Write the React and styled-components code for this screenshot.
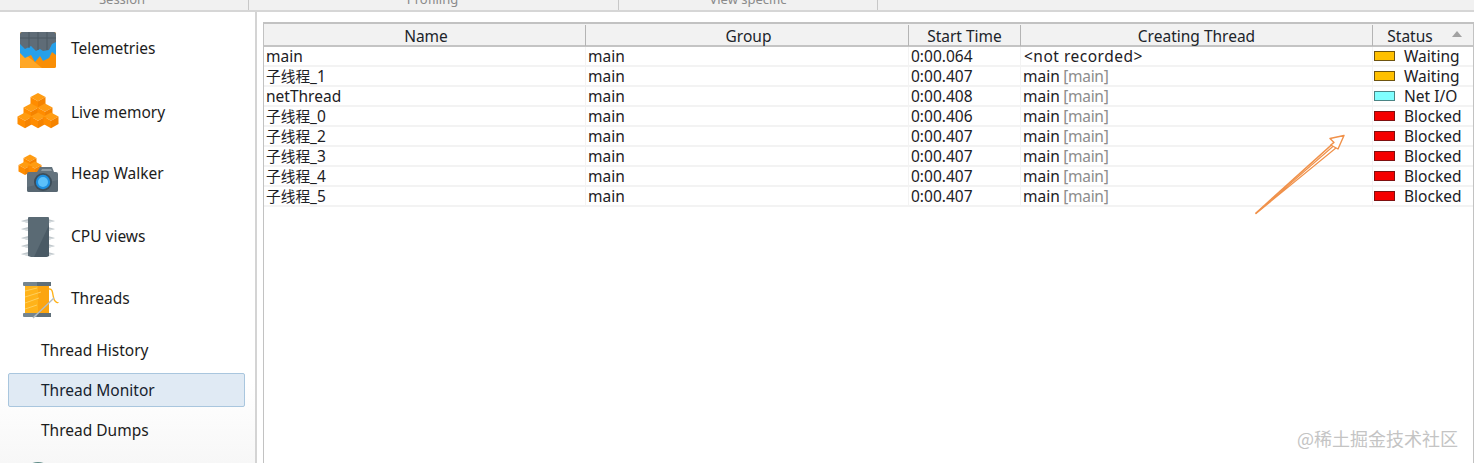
import React from "react";
import styled, { createGlobalStyle } from "styled-components";

const Global = createGlobalStyle`
  html, body { margin: 0; padding: 0; height: 463px; overflow: hidden; background: #fff; }
  body { font-family: "Noto Sans", "Noto Sans CJK SC", sans-serif; font-size: 15.5px; color: #1c1c1c; }
  * { box-sizing: border-box; }
`;
const Page = styled.div`position: relative; width: 1474px; height: 463px; display: flex; flex-direction: column; overflow: hidden;`;
const Toolbar = styled.div`height: 12px; flex: none; display: flex; background: #f1f1f1; border-bottom: 2px solid #d6d6d6; overflow: hidden;`;
const ToolGroup = styled.div`
  width: ${p => p.$w}px; flex: none; height: 10px; border-right: 1px solid #c8c8c8;
  display: flex; justify-content: center; padding-right: ${p => p.$pr || 0}px;
  span { font-size: 13px; line-height: 16px; margin-top: -9px; color: #8a8a8a; }
`;
const Body = styled.div`flex: 1; display: flex; min-height: 0;`;
const Sidebar = styled.nav`
  width: 257px; flex: none; border-right: 2px solid #d4d4d4; padding: 16px 8px 0 0; overflow: hidden;
  background: linear-gradient(180deg, #fff 0%, #fff 82%, #f7f7f7 100%);
`;
const NavItem = styled.div`height: 40px; margin-top: ${p => p.$gap}px; display: flex; align-items: center; padding-left: 16px;`;
const IconBox = styled.span`width: 44px; height: 40px; margin-right: 11px; flex: none; display: block; svg { display: block; overflow: visible; }`;
const SubItem = styled.div`
  height: 34px; margin: ${p => p.$gap}px 2px 0 8px; display: flex; align-items: center; padding: 0 0 1px 32px;
  border: 1px solid ${p => p.$active ? "#a9c6de" : "transparent"}; border-radius: 2px;
  background: ${p => p.$active ? "#e0eaf4" : "transparent"}; color: ${p => p.$active ? "#16222e" : "inherit"};
`;
const Content = styled.main`flex: 1; padding: 10px 0 0 6px; min-width: 0;`;
const Table = styled.div`width: 1211px; height: 460px; border: 2px solid #c2c2c2; border-bottom: 0; border-right-width: 1px; border-left-width: 1px;`;
const cols = "322px 323px 112px 352px 1fr";
const HeaderRow = styled.div`display: grid; grid-template-columns: ${cols}; height: 23px; background: #f2f2f2; border-bottom: 2px solid #c4c4c4;`;
const HeadCell = styled.div`
  display: flex; align-items: center; justify-content: center; position: relative; line-height: 19px; color: #20242a;
  padding: 2px ${p => p.$pr || 0}px 0 ${p => p.$pl || 0}px;
  border-right: ${p => p.$last ? "0" : "1px solid #b4b4b4"}; margin: 1px 0;
`;
const SortMark = styled.i`position: absolute; right: 11px; top: 6px; width: 0; height: 0; border-left: 5px solid transparent; border-right: 5px solid transparent; border-bottom: 6px solid #a2a2a2;`;
const Row = styled.div`display: grid; grid-template-columns: ${cols}; height: 20px; border-bottom: 2px solid #f3f3f3;`;
const Cell = styled.div`display: flex; align-items: center; padding: 0 0 3px 2px; line-height: 18px; white-space: pre; border-right: ${p => p.$last ? "0" : "1px solid #f3f3f3"}; height: 20px; color: #1c2024;`;
const Cjk = styled.span`font-size: 14.7px; font-family: "Noto Sans CJK SC", sans-serif;`;
const Muted = styled.span`color: #8c8c8c; margin-left: 3.5px; letter-spacing: -0.3px;`;
const NotRecorded = styled.span`letter-spacing: 0.5px; margin-left: 1px;`;
const Swatch = styled.i`width: 21px; height: 10px; flex: none; margin: 0 9px 0 -1px; background: ${p => p.$fill}; border: 1px solid ${p => p.$edge};`;
const Watermark = styled.div`position: absolute; right: 16px; bottom: 14px; font-size: 18px; line-height: 22px; color: #c4c4c4; font-family: "Noto Sans CJK SC", sans-serif; `;
const ArrowLayer = styled.svg`position: absolute; left: 1250px; top: 130px; pointer-events: none;`;

const Cube = ({ x, y, s = 7 }) => (
  <g>
    <path d={`M${x} ${y - s * .55}L${x + s} ${y}L${x} ${y + s * .55}L${x - s} ${y}Z`} fill="#ff9c12" />
    <path d={`M${x - s} ${y}L${x} ${y + s * .55}V${y + s * 1.55}L${x - s} ${y + s}Z`} fill="#ff8c00" />
    <path d={`M${x + s} ${y}L${x} ${y + s * .55}V${y + s * 1.55}L${x + s} ${y + s}Z`} fill="#f58300" />
  </g>
);
const TelemetryIcon = () => (
  <svg width="44" height="40" viewBox="0 0 44 40">
    <rect x="4" y="4" width="36" height="36" rx="2" fill="#ff9a0e" />
    <path d="M4 40V27L40 14V38a2 2 0 0 1-2 2Z" fill="#f98e05" />
    <path d="M4 22L26 40H6a2 2 0 0 1-2-2Z" fill="#ffa726" />
    <path d="M4 13H40V27L36 24L33 30L27 33L24 28L19 34L15 27L9 30L4 25Z" fill="#26a0ea" />
    <path d="M6 4H38a2 2 0 0 1 2 2V14L36 16L33 22L27 23L24 21L20 23L15 18L9 21L4 16V6a2 2 0 0 1 2-2Z" fill="#5f6c77" />
    <path d="M4 10H40M13 4V20M22 4V22M31 4V22" stroke="#4c5863" strokeWidth="1" fill="none" />
  </svg>
);
const MemoryIcon = () => (
  <svg width="44" height="40" viewBox="0 0 44 40">
    <Cube x={22} y={5} s={7.5} />
    <Cube x={15} y={15.5} s={7.5} />
    <Cube x={29} y={15.5} s={7.5} />
    <Cube x={9} y={24.5} s={7.5} />
    <Cube x={22} y={24.5} s={7.5} />
    <Cube x={35} y={24.5} s={7.5} />
  </svg>
);
const HeapIcon = () => (
  <svg width="44" height="40" viewBox="0 0 44 40">
    <Cube x={14} y={5} s={6.5} />
    <Cube x={9} y={12} s={6.5} />
    <Cube x={19} y={12} s={6.5} />
    <path d="M13 19H21L24 14H36L38 19H40a2 2 0 0 1 2 2V37a2 2 0 0 1-2 2H13a2 2 0 0 1-2-2V21a2 2 0 0 1 2-2Z" fill="#63727d" />
    <path d="M26 16H35L36 18H25Z" fill="#8f9ca5" />
    <path d="M11 34L42 27V37a2 2 0 0 1-2 2H13a2 2 0 0 1-2-2Z" fill="#586772" />
    <circle cx="27" cy="29" r="9" fill="#3d4d59" />
    <circle cx="27" cy="29" r="7.2" fill="#1e8fe0" />
    <circle cx="27" cy="29" r="5" fill="#5cc0fa" />
  </svg>
);
const CpuIcon = () => (
  <svg width="44" height="42" viewBox="0 0 44 42">
    <path d="M5 5L12 3V7ZM39 5L32 3V7ZM5 13L12 11V15ZM39 13L32 11V15ZM5 22L12 20V24ZM39 22L32 20V24ZM5 30L12 28V32ZM39 30L32 28V32ZM5 38L12 36V40ZM39 38L32 36V40Z" fill="#c0c8cc" />
    <path d="M5 5H39L32 7H12ZM5 13H39L32 15H12ZM5 22H39L32 24H12ZM5 30H39L32 32H12ZM5 38H39L32 40H12Z" fill="#d4dadd" />
    <path d="M13 1H32a1 1 0 0 1 1 1V40L30 41H15L12 40V2a1 1 0 0 1 1-1Z" fill="#5a6a74" />
    <path d="M33 9V40L30 41H18Z" fill="#4a5a65" />
  </svg>
);
const SpoolIcon = () => (
  <svg width="44" height="42" viewBox="0 0 44 42">
    <rect x="9" y="8" width="24" height="27" fill="#ffb31a" />
    <path d="M22 8H33V35H22Z" fill="#fca510" />
    <path d="M9 13L21 10M9 19L25 14M9 25L23 20M9 31L21 27" stroke="#ffcf5c" strokeWidth="1" />
    <rect x="7" y="4" width="28" height="4" rx="1" fill="#75858f" />
    <rect x="7" y="35" width="28" height="4" rx="1" fill="#75858f" />
    <path d="M21 4H35V8H21ZM21 35H35V39H21Z" fill="#5f6f79" />
    <path d="M33 11C38 10 36 20 39 23C41 25 42 25 42 24" stroke="#ffb31a" strokeWidth="1.4" fill="none" />
    <path d="M17 40L38 20" stroke="#b4bdc3" strokeWidth="1.4" />
  </svg>
);
const NextIcon = () => (
  <svg width="44" height="40" viewBox="0 0 44 40"><circle cx="22" cy="16" r="15" fill="#5d8a86" /></svg>
);

const rows = [
  [null, "main", "0:00.064", null, "w"],
  ["子线程", "_1", "0:00.407", 1, "w"],
  [null, "netThread", "0:00.408", 1, "n"],
  ["子线程", "_0", "0:00.406", 1, "b"],
  ["子线程", "_2", "0:00.407", 1, "b"],
  ["子线程", "_3", "0:00.407", 1, "b"],
  ["子线程", "_4", "0:00.407", 1, "b"],
  ["子线程", "_5", "0:00.407", 1, "b"],
];
const statuses = {
  w: { label: "Waiting", fill: "#ffc000", edge: "#6e5410" },
  n: { label: "Net I/O", fill: "#80ffff", edge: "#4b8585" },
  b: { label: "Blocked", fill: "#f40000", edge: "#7f1010" },
};

export default function App() {
  return (
    <Page>
      <Global />
      <Toolbar>
        <ToolGroup $w={249} $pr={4}><span>Session</span></ToolGroup>
        <ToolGroup $w={370} $pr={2}><span>Profiling</span></ToolGroup>
        <ToolGroup $w={259} ><span>View specific</span></ToolGroup>
      </Toolbar>
      <Body>
        <Sidebar>
          <NavItem $gap={0}><IconBox><TelemetryIcon /></IconBox><span>Telemetries</span></NavItem>
          <NavItem $gap={24}><IconBox><MemoryIcon /></IconBox><span>Live memory</span></NavItem>
          <NavItem $gap={21}><IconBox><HeapIcon /></IconBox><span>Heap Walker</span></NavItem>
          <NavItem $gap={23}><IconBox><CpuIcon /></IconBox><span>CPU views</span></NavItem>
          <NavItem $gap={22}><IconBox><SpoolIcon /></IconBox><span>Threads</span></NavItem>
          <SubItem $gap={15}>Thread History</SubItem>
          <SubItem $gap={6} $active>Thread Monitor</SubItem>
          <SubItem $gap={6}>Thread Dumps</SubItem>
          <NavItem $gap={14}><IconBox><NextIcon /></IconBox></NavItem>
        </Sidebar>
        <Content>
          <Table>
            <HeaderRow>
              <HeadCell $pl={3}>Name</HeadCell>
              <HeadCell $pl={3}>Group</HeadCell>
              <HeadCell>Start Time</HeadCell>
              <HeadCell>Creating Thread</HeadCell>
              <HeadCell $last $pr={26}>Status<SortMark /></HeadCell>
            </HeaderRow>
            {rows.map(([cjk, name, time, rec, st]) => (
              <Row key={name}>
                <Cell>{cjk && <Cjk>{cjk}</Cjk>}{name}</Cell>
                <Cell>main</Cell>
                <Cell>{time}</Cell>
                <Cell>{rec ? <>main<Muted>[main]</Muted></> : <NotRecorded>{"<not recorded>"}</NotRecorded>}</Cell>
                <Cell $last><Swatch $fill={statuses[st].fill} $edge={statuses[st].edge} />{statuses[st].label}</Cell>
              </Row>
            ))}
          </Table>
        </Content>
      </Body>
      <ArrowLayer width="100" height="90" viewBox="0 0 100 90">
        <path d="M5.5 83.5L88 9" stroke="#f0914a" strokeWidth="1.6" fill="none" />
        <path d="M6 83.5L84 15.5L86.5 17.5Z" fill="#fff" stroke="#f0914a" strokeWidth="1.2" strokeLinejoin="round" />
        <path d="M94 5.5L80 8.5L84 12.5L80.8 15L88 19Z" fill="#fff" stroke="#f0914a" strokeWidth="1.4" strokeLinejoin="round" />
      </ArrowLayer>
      <Watermark>@稀土掘金技术社区</Watermark>
    </Page>
  );
}
